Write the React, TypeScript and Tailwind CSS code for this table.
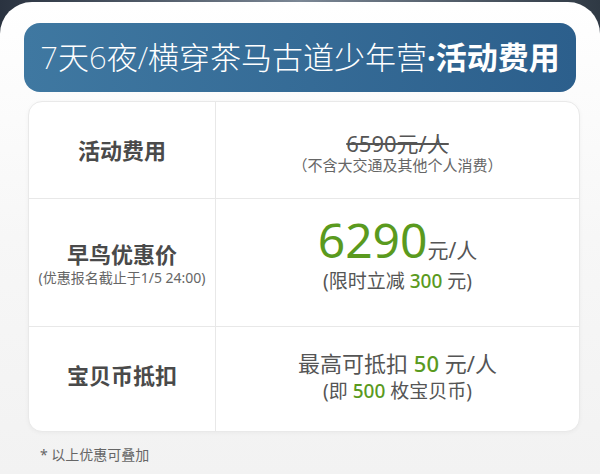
import React from "react"

const cjk = { fontFamily: '"Noto Sans", "Noto Sans CJK SC", sans-serif' }

const Green = ({ children }: { children: React.ReactNode }) => (
  <span className="text-[#5a9a1e] font-medium">{children}</span>
)

const App = () => {
  return (
    <div
      className="w-[600px] h-[474px] overflow-hidden bg-gradient-to-r from-[#2a3340] via-[#7b8795] to-[#2f3944]"
      style={cjk}>
      <div className="mt-[2px] h-[472px] rounded-t-[32px] bg-gradient-to-b from-white via-[#f7f7f7] to-[#f2f2f2] flex flex-col">

        {/* title */}
        <div className="mt-[21px] mx-[24px] h-[69px] rounded-[16px] bg-gradient-to-r from-[#3f78a1] to-[#2c5f8c] flex items-center justify-center text-white text-[31px]">
          <span className="font-extralight">7天6夜/横穿茶马古道少年营</span>
          <span className="font-bold">·活动费用</span>
        </div>

        {/* table */}
        <div className="mt-[9px] ml-[28px] w-[552px] rounded-[14px] border border-[#e9e9e9] bg-white shadow-[0_1px_4px_rgba(0,0,0,0.04)] grid grid-cols-[187px_1fr] overflow-hidden">

          <div className="h-[97px] border-r border-b border-[#e8e8e8] flex items-center justify-center pt-[1px]">
            <div className="text-[22px] font-bold text-[#4a4a4a]">活动费用</div>
          </div>
          <div className="h-[97px] border-b border-[#e8e8e8] flex flex-col items-center pt-[29px]">
            <div className="text-[22px] leading-[24px] text-[#555] line-through decoration-[1.5px]">6590元/人</div>
            <div className="mt-[2px] text-[15px] leading-[16px] text-[#666]">（不含大交通及其他个人消费）</div>
          </div>

          <div className="h-[128px] border-r border-b border-[#e8e8e8] flex flex-col items-center justify-center pt-[2px]">
            <div className="text-[22px] leading-[28px] font-bold text-[#4a4a4a]">早鸟优惠价</div>
            <div className="text-[14px] leading-[20px] text-[#666]">(优惠报名截止于1/5 24:00)</div>
          </div>
          <div className="h-[128px] border-b border-[#e8e8e8] flex flex-col items-center pt-[19px]">
            <div className="flex items-baseline">
              <span className="text-[48px] leading-[44px] text-[#5a9a1e]">6290</span>
              <span className="text-[21px] leading-none text-[#555]">元/人</span>
            </div>
            <div className="mt-[7px] text-[19px] leading-[24px] text-[#555]">
              (限时立减 <Green>300</Green> 元)
            </div>
          </div>

          <div className="h-[104px] border-r border-[#e8e8e8] flex items-center justify-center pb-[8px]">
            <div className="text-[22px] font-bold text-[#4a4a4a]">宝贝币抵扣</div>
          </div>
          <div className="h-[104px] flex flex-col items-center justify-center pb-[6px]">
            <div className="text-[22px] leading-[29px] text-[#555]">
              最高可抵扣 <Green>50</Green> 元/人
            </div>
            <div className="text-[19px] leading-[26px] text-[#555]">
              (即 <Green>500</Green> 枚宝贝币)
            </div>
          </div>
        </div>

        {/* note */}
        <div className="mt-[12px] ml-[40px] text-[14px] text-[#666]">* 以上优惠可叠加</div>
      </div>
    </div>
  )
}

export default App
